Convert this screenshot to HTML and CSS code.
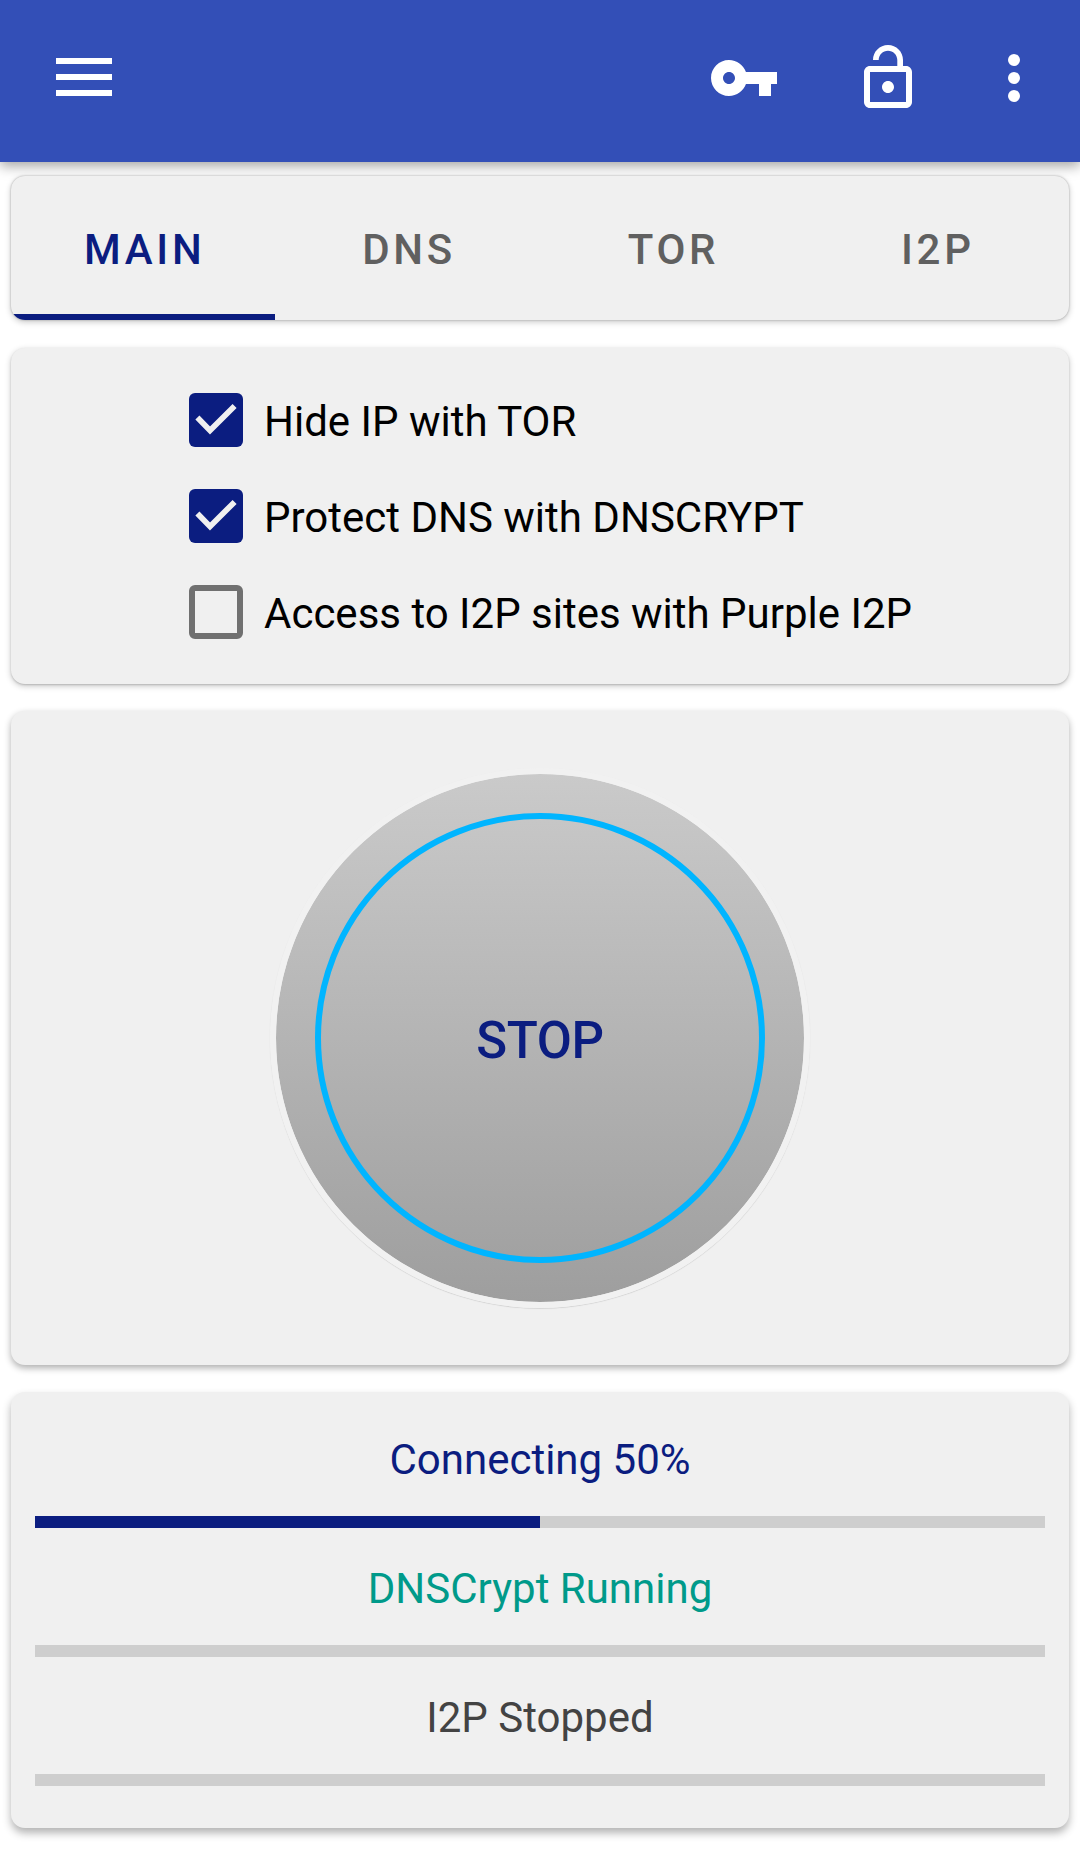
FILE: index.html
```html
<!DOCTYPE html>
<html lang="en">
<head>
<meta charset="utf-8">
<title>DNS, Tor and I2P control</title>
<link rel="stylesheet" href="styles.css">
</head>
<body>
<header class="app-bar">
  <svg class="menu" viewBox="0 0 56 38" aria-label="Menu"><path d="M0 0h56v6H0zM0 16h56v6H0zM0 32h56v6H0z"/></svg>
  <div class="actions">
    <svg class="icon" viewBox="0 0 24 24" aria-label="VPN key"><path d="M12.65 10C11.83 7.67 9.61 6 7 6c-3.31 0-6 2.69-6 6s2.69 6 6 6c2.61 0 4.83-1.67 5.65-4H17v4h4v-4h2v-4H12.65zM7 14c-1.1 0-2-.9-2-2s.9-2 2-2 2 .9 2 2-.9 2-2 2z"/></svg>
    <svg class="icon" viewBox="0 0 24 24" aria-label="Unlocked"><path d="M12 17c1.1 0 2-.9 2-2s-.9-2-2-2-2 .9-2 2 .9 2 2 2zm6-9h-1V6c0-2.76-2.24-5-5-5S7 3.24 7 6h1.9c0-1.71 1.39-3.1 3.1-3.1s3.1 1.39 3.1 3.1v2H6c-1.1 0-2 .9-2 2v10c0 1.1.9 2 2 2h12c1.1 0 2-.9 2-2V10c0-1.1-.9-2-2-2zm0 12H6V10h12v10z"/></svg>
    <svg class="icon more" viewBox="0 0 24 24" aria-label="More options"><circle cx="12" cy="6" r="2"/><circle cx="12" cy="12" r="2"/><circle cx="12" cy="18" r="2"/></svg>
  </div>
</header>
<main class="content">
  <nav class="card tabs">
    <a class="tab active">MAIN</a>
    <a class="tab">DNS</a>
    <a class="tab">TOR</a>
    <a class="tab">I2P</a>
  </nav>
  <section class="card options">
    <label class="option"><svg class="box checked" viewBox="0 0 18 18"><rect width="18" height="18" rx="2"/><path d="M2.8 8.2 7 12.5l8.2-8.2"/></svg><span>Hide IP with TOR</span></label>
    <label class="option"><svg class="box checked" viewBox="0 0 18 18"><rect width="18" height="18" rx="2"/><path d="M2.8 8.2 7 12.5l8.2-8.2"/></svg><span>Protect DNS with DNSCRYPT</span></label>
    <label class="option"><span class="box empty"></span><span>Access to I2P sites with Purple I2P</span></label>
  </section>
  <section class="card power">
    <button class="dial"><span class="ring">STOP</span></button>
  </section>
  <section class="card status">
    <p class="state connecting">Connecting 50%</p>
    <div class="bar"><div class="fill" style="width: 50%"></div></div>
    <p class="state running">DNSCrypt Running</p>
    <div class="bar"></div>
    <p class="state stopped">I2P Stopped</p>
    <div class="bar"></div>
  </section>
</main>
</body>
</html>
```
FILE: styles.css
```css
* {
  box-sizing: border-box;
}

body {
  margin: 0;
  background: #fff;
  color: #000;
  font-family: Roboto, "Liberation Sans", sans-serif;
  font-size: 42px;
}

.app-bar {
  display: flex;
  align-items: flex-start;
  justify-content: space-between;
  height: 162px;
  padding: 42px 30px 0 56px;
  background: #334fb7;
  box-shadow: 0 4px 12px rgba(0, 0, 0, 0.36);
}

.app-bar svg {
  fill: #fff;
}

.menu {
  width: 56px;
  height: 38px;
  margin-top: 16px;
}

.actions {
  display: flex;
  gap: 72px;
}

.icon {
  width: 72px;
  height: 72px;
}

.more {
  margin-left: -18px;
}

.content {
  display: flex;
  flex-direction: column;
  padding: 14px 11px 26px;
}

.card {
  border-radius: 14px;
  background: #f0f0f0;
  box-shadow: 0 1px 2px rgba(0, 0, 0, 0.16), 0 2px 6px rgba(0, 0, 0, 0.22);
}

.tabs {
  display: grid;
  grid-template-columns: repeat(4, 264.4px);
  height: 144px;
  overflow: hidden;
  box-shadow: 0 0 2px rgba(0, 0, 0, 0.3), 0 2px 6px rgba(0, 0, 0, 0.22);
}

.tab {
  display: flex;
  align-items: center;
  justify-content: center;
  padding: 3px 0 0 3px;
  color: #606060;
  font-weight: 500;
  letter-spacing: 3.75px;
}

.tab.active {
  color: #0b1d80;
  box-shadow: inset 0 -6px #0b1d80;
}

.options {
  height: 336px;
  margin-top: 28px;
  padding: 24px 0 0 178px;
}

.option {
  display: flex;
  align-items: center;
  gap: 21px;
  height: 96px;
}

.option span:last-child {
  padding-top: 3px;
}

.box {
  width: 54px;
  height: 54px;
}

.checked {
  fill: #0b1d80;
}

.checked path {
  fill: none;
  stroke: #f0f0f0;
  stroke-width: 1.9;
}

.empty {
  border: 6px solid #707070;
  border-radius: 6px;
}

.power {
  display: flex;
  align-items: center;
  justify-content: center;
  height: 654px;
  margin-top: 27px;
  box-shadow: 0 3px 7px rgba(0, 0, 0, 0.32);
}

.dial {
  display: flex;
  align-items: center;
  justify-content: center;
  width: 540px;
  height: 540px;
  padding: 0;
  border: 6px solid #f1f1f1;
  border-radius: 50%;
  background: linear-gradient(#cacaca, #9e9e9e) padding-box;
  box-shadow: 0 0.7px 1px rgba(0, 0, 0, 0.14);
}

.ring {
  display: flex;
  align-items: center;
  justify-content: center;
  width: 450px;
  height: 450px;
  padding-top: 4px;
  border: 6px solid #00b5ff;
  border-radius: 50%;
  color: #0b1d80;
  font: 500 51px Roboto, "Liberation Sans", sans-serif;
  letter-spacing: -0.4px;
}

.status {
  height: 436px;
  margin-top: 27px;
  padding: 31px 24px 0;
  box-shadow: 0 5px 8px rgba(0, 0, 0, 0.3);
}

.state {
  margin: 0;
  height: 93px;
  line-height: 73px;
  text-align: center;
}

.connecting {
  color: #0b1d80;
}

.running {
  color: #009a8a;
}

.stopped {
  color: #434343;
}

.bar {
  height: 12px;
  margin-bottom: 24px;
  background: #cecece;
}

.fill {
  height: 100%;
  background: #0b1d80;
}
```
